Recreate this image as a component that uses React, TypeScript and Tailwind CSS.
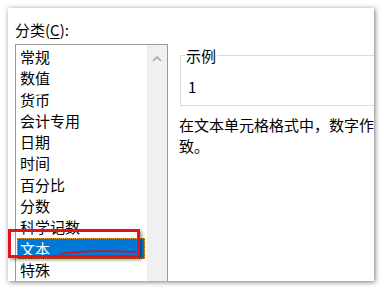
import React from "react";

const items = ["常规", "数值", "货币", "会计专用", "日期", "时间", "百分比", "分数", "科学记数", "文本", "特殊"];

export default function App() {
  return (
    <div
      className="w-[384px] h-[291px] bg-white pt-[8px] pl-[8px] text-black"
      style={{ fontFamily: '"Noto Sans CJK SC", "Noto Sans", sans-serif' }}
    >
      <div className="relative w-[366px] h-[273px] bg-white overflow-hidden shadow-[1px_1px_5px_rgba(0,0,0,0.55)]">
        <div className="flex">
          {/* left column */}
          <div className="ml-[7px] w-[153px] shrink-0">
            <div className="pt-[13px] text-[15px] leading-[17px]">
              分类(<span className="underline underline-offset-2">C</span>):
            </div>
            <div className="mt-[6px] flex h-[260px] border-l border-t border-r border-[#9a9a9a]">
              <div className="flex-1 pt-[1px] pl-[1px] pr-[2px]">
                {items.map((t) =>
                  t === "文本" ? (
                    <div
                      key={t}
                      className="h-[21.3px] leading-[19px] pl-[2px] bg-[#0078d7] text-white text-[15px] border border-dotted border-[#f2a33a]"
                    >
                      {t}
                    </div>
                  ) : (
                    <div key={t} className="h-[21.3px] leading-[21.3px] pl-[3px] text-[15px]">
                      {t}
                    </div>
                  )
                )}
              </div>
              <div className="w-[20px] bg-[#f0f0f0] flex justify-center pt-[11px]">
                <svg width="10" height="6" viewBox="0 0 10 6">
                  <path d="M1 5 L5 1 L9 5" fill="none" stroke="#a6a6a6" strokeWidth="1.6" />
                </svg>
              </div>
            </div>
          </div>
          {/* right column */}
          <div className="ml-[11px] shrink-0">
            <div className="relative mt-[47px] ml-[1px] w-[230px] h-[51px] border border-[#dcdcdc] pt-[20px] pl-[7px] text-[15px] leading-[21px]">
              <span className="absolute -top-[9px] left-[4px] bg-white px-[1px] leading-[17px]">示例</span>
              1
            </div>
            <div className="mt-[8px] text-[15px] leading-[21px] whitespace-nowrap">
              <div>在文本单元格格式中，数字作为文本处理。单元格显示的内容与输入的内容完全一</div>
              <div>致。</div>
            </div>
          </div>
        </div>
        {/* red highlight */}
        <div className="absolute left-0 top-[221px] w-[132px] h-[29px] border-[3px] border-[#e8101a] shadow-[2px_2px_3px_rgba(0,0,0,0.4)]" />
        <svg className="absolute left-[50px] top-[240px]" width="80" height="8" viewBox="0 0 80 8">
          <path d="M2 6 C 20 3, 40 2, 78 4" fill="none" stroke="#d0101c" strokeWidth="1.6" strokeLinecap="round" />
        </svg>
      </div>
    </div>
  );
}
